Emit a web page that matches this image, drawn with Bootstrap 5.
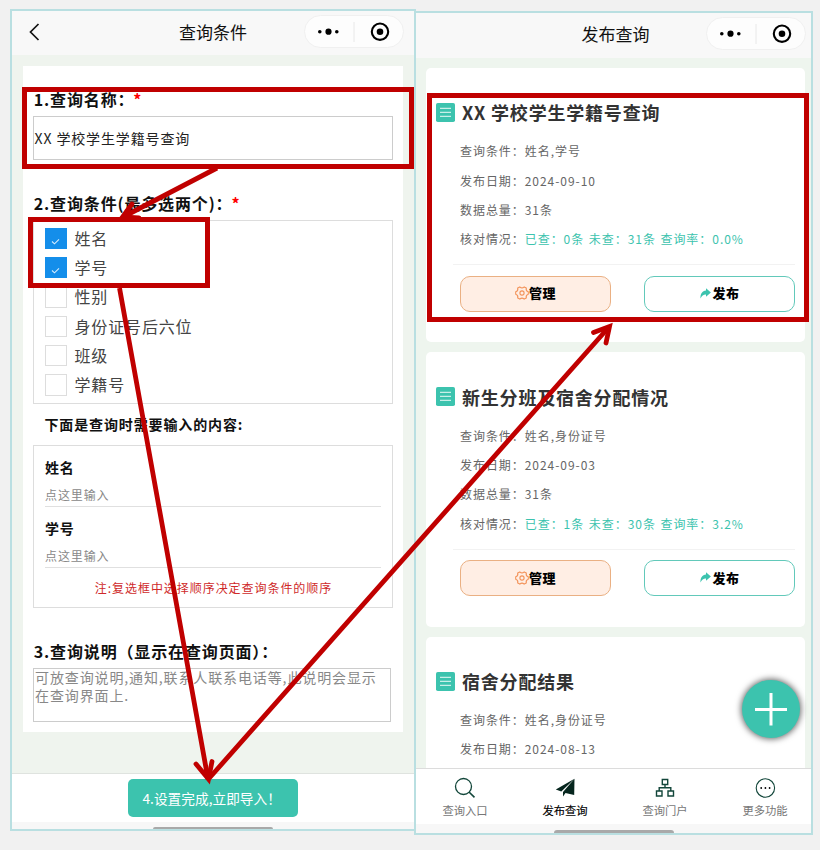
<!DOCTYPE html>
<html lang="zh-CN">
<head>
<meta charset="utf-8">
<meta name="viewport" content="width=device-width, initial-scale=1">
<title>查询条件</title>
<link href="https://cdn.jsdelivr.net/npm/bootstrap@5.3.0/dist/css/bootstrap.min.css" rel="stylesheet">
<style>
:root{--teal:#3cc3ae;--frame:#b9dfe1}
body{width:820px;height:850px;overflow:hidden;background:#f1f1f1;padding:9px 0 0 10px;font-family:"Noto Sans CJK SC",sans-serif;color:#111;line-height:1}
.phone{flex:none;border:2px solid var(--frame);background:#eff4ee;overflow:hidden}
.phone-a{width:406px;height:822px;padding:0 1px}
.phone-b{width:399px;height:824px;margin:2px 0 0 -2px;background:#eef5ee}
.topbar{background:#f8f8f8;flex:none}
.phone-a .topbar{height:44px;margin:0 -1px;padding:4px 10px 0 16px}
.phone-b .topbar{height:45px;padding:4px 5px 0 16px}
.topbar h1{font-size:17px;font-weight:400;line-height:33px;margin:0;color:#111}
.side{width:94px}
.phone-b .side{width:93px}
.topbar .capsule{width:100px;height:33px;border:1px solid #f0f0f0;background:#fdfdfd;flex:none}
.sheet{margin:11px 10px 0;height:666px;padding:0 10px;flex:none}
.q{font-size:16px;font-weight:700;letter-spacing:.86px;line-height:24px;margin:0 0 0 .7px;white-space:nowrap}
.q i{color:#f00;font-style:normal;margin-left:-1px}
.name-input{height:44px;border:1px solid #ccc;font-size:14px;letter-spacing:.87px;line-height:42px;padding-left:.6px;color:#222;width:360px}
.opts{width:360px;height:184px;border:1px solid #ddd;padding:2.600px 11px}
.opt{height:29.35px;font-size:16px;letter-spacing:.85px;color:#444}
.opt em{font-style:normal;margin-top:-1px}
.tick{width:21.500px;height:21.500px;border:1px solid #ddd;margin-right:8px;flex:none}
.tick.on{background:#148eea;border-color:#148eea}
.sub{font-size:14px;font-weight:700;letter-spacing:.87px;line-height:22px;white-space:nowrap}
.preview{width:360px;height:163px;border:1px solid #ddd;padding:10px 11px 0}
.ph{font-size:12px;letter-spacing:.9px;color:#888;line-height:22px;border-bottom:1px solid #e0e0e0}
.note{font-size:12px;letter-spacing:.95px;color:#cf2a2a;line-height:20px;white-space:nowrap;padding-left:1px}
.desc{width:358px;height:54px;border:1px solid #ccc;font-size:14px;letter-spacing:.88px;line-height:17.600px;color:#888;padding:0 0 0 1px;white-space:nowrap}
.dock{background:#fff;border-top:1px solid #dfe3df;margin:0 -1px;flex:none}
.import{width:170px;height:38px;background:var(--teal);border-radius:5px;color:#fff;font-size:13.700px;line-height:38px;padding:0 0 0 14.500px;border:0;text-align:left;white-space:nowrap}
.homebar{background:#f7f7f7;margin:0 -1px}
.phone-b .homebar{margin-right:-2px}
.homebar span{width:120px;background:#a9a9a9;border-radius:3px 3px 0 0}
.feed{height:710px;padding:10px 6px 0 10px;overflow:hidden;flex:none}
.item{background:#fff;border-radius:5px;height:274.400px;margin-bottom:10px;padding:31.300px 10px 0;flex:none}
.item h2{font-size:18px;letter-spacing:.8px;font-weight:700;color:#333;line-height:26px;margin:0 0 0 7px;white-space:nowrap}
.facts{font-size:12px;letter-spacing:.95px;color:#666;margin-left:24px;padding-top:11px;white-space:nowrap}
.facts div{line-height:29.350px}
.facts span{color:var(--teal);word-spacing:1px}
.rule{height:1px;background:#f2f2f2;margin:10.700px 0 10.600px 17px}
.act{width:151px;height:36px;border:1px solid;border-radius:10px;font-size:13px;letter-spacing:.4px;font-weight:700}
.act b{color:#000;margin-top:-2px}
.act svg{margin-top:-1px}
.share svg{margin-right:2px}
.manage{background:#ffeee4;border-color:#eab083;color:#f3935a}
.share{background:#fff;border-color:#62c9ba;color:var(--teal)}
.tabs{height:56px;background:#fff;border-top:1px solid #dcdcdc;margin-left:-1px;flex:none}
.tab{width:100px;flex:none;font-size:11.300px;color:#777;padding-top:8px}
.tab.now{color:#000;-webkit-text-stroke:.15px #000}
.tab div{line-height:18px;margin-top:2px}
.fab{left:742px;top:680px;width:58px;height:58px;background:var(--teal);box-shadow:0 0 6px 1px rgba(0,0,0,.6)}
svg{display:block}
.notes{left:0;top:0}
</style>
</head>
<body class="position-relative">
<svg width="0" height="0" class="position-absolute">
  <symbol id="caps" viewBox="0 0 98 31"><circle cx="14.800" cy="15.700" r="1.800"/><circle cx="23.500" cy="15.700" r="3.100"/><circle cx="31.800" cy="15.700" r="1.800"/><path d="M49 6v20" stroke="#e8e8e8"/><circle cx="75" cy="15.700" r="8.200" fill="none" stroke="#000" stroke-width="2.100"/><circle cx="75" cy="15.700" r="3.300"/></symbol>
  <symbol id="sheet-ico" viewBox="0 0 19 19"><rect width="19" height="19" rx="1.800" fill="#3cc3ae"/><path d="M4 5.300h11M4 9.300h11M4 13.300h11" stroke="#c8efe8" stroke-width="1.300"/></symbol>
  <symbol id="gear" viewBox="0 0 14 14"><path d="M4.800.9Q7 3 9.200.9L11.300 2.100Q10.600 5 13.300 5.800V8.200Q10.600 9 11.300 11.900L9.200 13.100Q7 11 4.800 13.100L2.700 11.900Q3.400 9 .7 8.200V5.800Q3.400 5 2.700 2.100z" fill="none" stroke="currentColor" stroke-width="1.100" stroke-linejoin="round"/><circle cx="7" cy="7" r="2.100" fill="none" stroke="currentColor" stroke-width="1.100"/></symbol>
  <symbol id="fwd" viewBox="0 0 11 11"><path d="M6 .2 10.900 4.400 6 8.700V6.500C3.500 6.400 1.800 7.700.5 10.600.1 6 2.300 2.700 6 2.500z" fill="currentColor"/></symbol>
</svg>

<div class="d-flex align-items-start">
  <main class="phone phone-a d-flex flex-column">
    <header class="topbar d-flex justify-content-between">
      <div class="side"><svg width="14" height="20" viewBox="0 0 14 20" style="margin-top:7px"><path d="M10.500 2 2.500 10l8 8" fill="none" stroke="#111" stroke-width="1.700"/></svg></div>
      <h1>查询条件</h1>
      <div class="capsule rounded-pill"><svg width="98" height="31"><use href="#caps"/></svg></div>
    </header>
    <section class="sheet bg-white">
      <p class="q" style="padding-top:21px">1.查询名称：<i>*</i></p>
      <div class="name-input" style="margin-top:5px">XX 学校学生学籍号查询</div>
      <p class="q" style="padding-top:31px">2.查询条件(最多选两个)：<i>*</i></p>
      <div class="opts" style="margin-top:5px">
        <div class="opt d-flex align-items-center"><span class="tick on"><svg width="19" height="19" viewBox="0 0 19 19"><path d="M6 12.500l2.500 2.300 4.500-4.500" fill="none" stroke="#d5ebfc" stroke-width="1.100"/></svg></span><em>姓名</em></div>
        <div class="opt d-flex align-items-center"><span class="tick on"><svg width="19" height="19" viewBox="0 0 19 19"><path d="M6 12.500l2.500 2.300 4.500-4.500" fill="none" stroke="#d5ebfc" stroke-width="1.100"/></svg></span><em>学号</em></div>
        <div class="opt d-flex align-items-center"><span class="tick"></span><em>性别</em></div>
        <div class="opt d-flex align-items-center"><span class="tick"></span><em>身份证号后六位</em></div>
        <div class="opt d-flex align-items-center"><span class="tick"></span><em>班级</em></div>
        <div class="opt d-flex align-items-center"><span class="tick"></span><em>学籍号</em></div>
      </div>
      <div class="sub" style="padding:9px 0 10px 11.500px">下面是查询时需要输入的内容:</div>
      <div class="preview">
        <div class="sub">姓名</div>
        <div class="ph" style="margin-top:6px">点这里输入</div>
        <div class="sub" style="margin-top:10px">学号</div>
        <div class="ph" style="margin-top:6px">点这里输入</div>
        <div class="note text-center" style="margin-top:10px">注:复选框中选择顺序决定查询条件的顺序</div>
      </div>
      <p class="q" style="padding-top:31px">3.查询说明（显示在查询页面）：</p>
      <div class="desc" style="margin-top:5px">可放查询说明,通知,联系人联系电话等,此说明会显示<br>在查询界面上.</div>
    </section>
    <footer class="mt-auto dock">
      <div class="d-flex justify-content-center" style="height:48px;padding-top:5px"><button class="import">4.设置完成,立即导入！</button></div>
    </footer>
    <div class="homebar d-flex justify-content-center align-items-end" style="height:7px"><span style="height:2px"></span></div>
  </main>

  <section class="phone phone-b d-flex flex-column">
    <header class="topbar d-flex justify-content-between">
      <div class="side"></div>
      <h1>发布查询</h1>
      <div class="capsule rounded-pill"><svg width="98" height="31"><use href="#caps"/></svg></div>
    </header>
    <div class="feed d-flex flex-column">
      <article class="item">
        <div class="d-flex align-items-center"><svg width="19" height="19"><use href="#sheet-ico"/></svg><h2>XX 学校学生学籍号查询</h2></div>
        <div class="facts"><div>查询条件：姓名,学号</div><div>发布日期：2024-09-10</div><div>数据总量：31条</div><div>核对情况：<span>已查：0条 未查：31条 查询率：0.0%</span></div></div>
        <div class="rule"></div>
        <div class="d-flex justify-content-between" style="margin-left:24px"><div class="act manage d-flex align-items-center justify-content-center"><svg width="14" height="14"><use href="#gear"/></svg><b>管理</b></div><div class="act share d-flex align-items-center justify-content-center"><svg width="11" height="11"><use href="#fwd"/></svg><b>发布</b></div></div>
      </article>
      <article class="item">
        <div class="d-flex align-items-center"><svg width="19" height="19"><use href="#sheet-ico"/></svg><h2>新生分班及宿舍分配情况</h2></div>
        <div class="facts"><div>查询条件：姓名,身份证号</div><div>发布日期：2024-09-03</div><div>数据总量：31条</div><div>核对情况：<span>已查：1条 未查：30条 查询率：3.2%</span></div></div>
        <div class="rule"></div>
        <div class="d-flex justify-content-between" style="margin-left:24px"><div class="act manage d-flex align-items-center justify-content-center"><svg width="14" height="14"><use href="#gear"/></svg><b>管理</b></div><div class="act share d-flex align-items-center justify-content-center"><svg width="11" height="11"><use href="#fwd"/></svg><b>发布</b></div></div>
      </article>
      <article class="item">
        <div class="d-flex align-items-center"><svg width="19" height="19"><use href="#sheet-ico"/></svg><h2>宿舍分配结果</h2></div>
        <div class="facts"><div>查询条件：姓名,身份证号</div><div>发布日期：2024-08-13</div></div>
      </article>
    </div>
    <nav class="tabs d-flex text-center">
      <div class="tab"><svg class="mx-auto" width="22" height="22" viewBox="0 0 22 22"><circle cx="9.500" cy="9.500" r="8" fill="none" stroke="#12463a" stroke-width="1.300"/><path d="M15 15l5.500 5.300" stroke="#12463a" stroke-width="1.600"/></svg><div>查询入口</div></div>
      <div class="tab now"><svg class="mx-auto" width="22" height="22" viewBox="0 0 22 22"><path d="M20.500 1.800 1.800 12.500l5.500 2z M20.500 1.800 9 15v4.500l2.500-3.500 8.700 2z" fill="#06261e"/></svg><div>发布查询</div></div>
      <div class="tab"><svg class="mx-auto" width="22" height="22" viewBox="0 0 22 22"><path d="M8.300 2.500h5.400v5H8.300zM2.500 14h5.500v5h-5.500zM14 14h5.500v5h-5.500zM11 7.500v3.300M5.200 14v-3.200h11.600V14" fill="none" stroke="#12463a" stroke-width="1.400"/></svg><div>查询门户</div></div>
      <div class="tab"><svg class="mx-auto" width="22" height="22" viewBox="0 0 22 22"><circle cx="11.400" cy="11" r="9.200" fill="none" stroke="#12463a" stroke-width="1.100"/><circle cx="7.200" cy="11" r=".9"/><circle cx="11.400" cy="11" r=".9"/><circle cx="15.600" cy="11" r=".9"/></svg><div>更多功能</div></div>
    </nav>
    <div class="homebar d-flex justify-content-center align-items-end flex-fill"><span style="height:3px"></span></div>
  </section>
</div>

<div class="fab rounded-circle position-absolute"><svg width="58" height="58"><path d="M13 29.500h32M29 13v32.500" stroke="#fff" stroke-width="3"/></svg></div>
<svg class="notes position-absolute" width="820" height="850" fill="none" stroke="#c00000" stroke-width="5">
  <path d="M24.500 89.500h387v77h-387zM30.500 219.500h177v66h-177zM429.500 95.500h377v224h-377z"/>
  <path d="M217 168 123 217M119.500 288 208 779M208.500 779 609 327" stroke-width="4.800"/>
  <path d="M132 204 122.500 217l16.500 1M196 764l12.500 15L212 761.500M593.500 332.500 609.500 326.500 606 343" stroke-linecap="round" stroke-width="4.800"/>
</svg>
</body>
</html>
